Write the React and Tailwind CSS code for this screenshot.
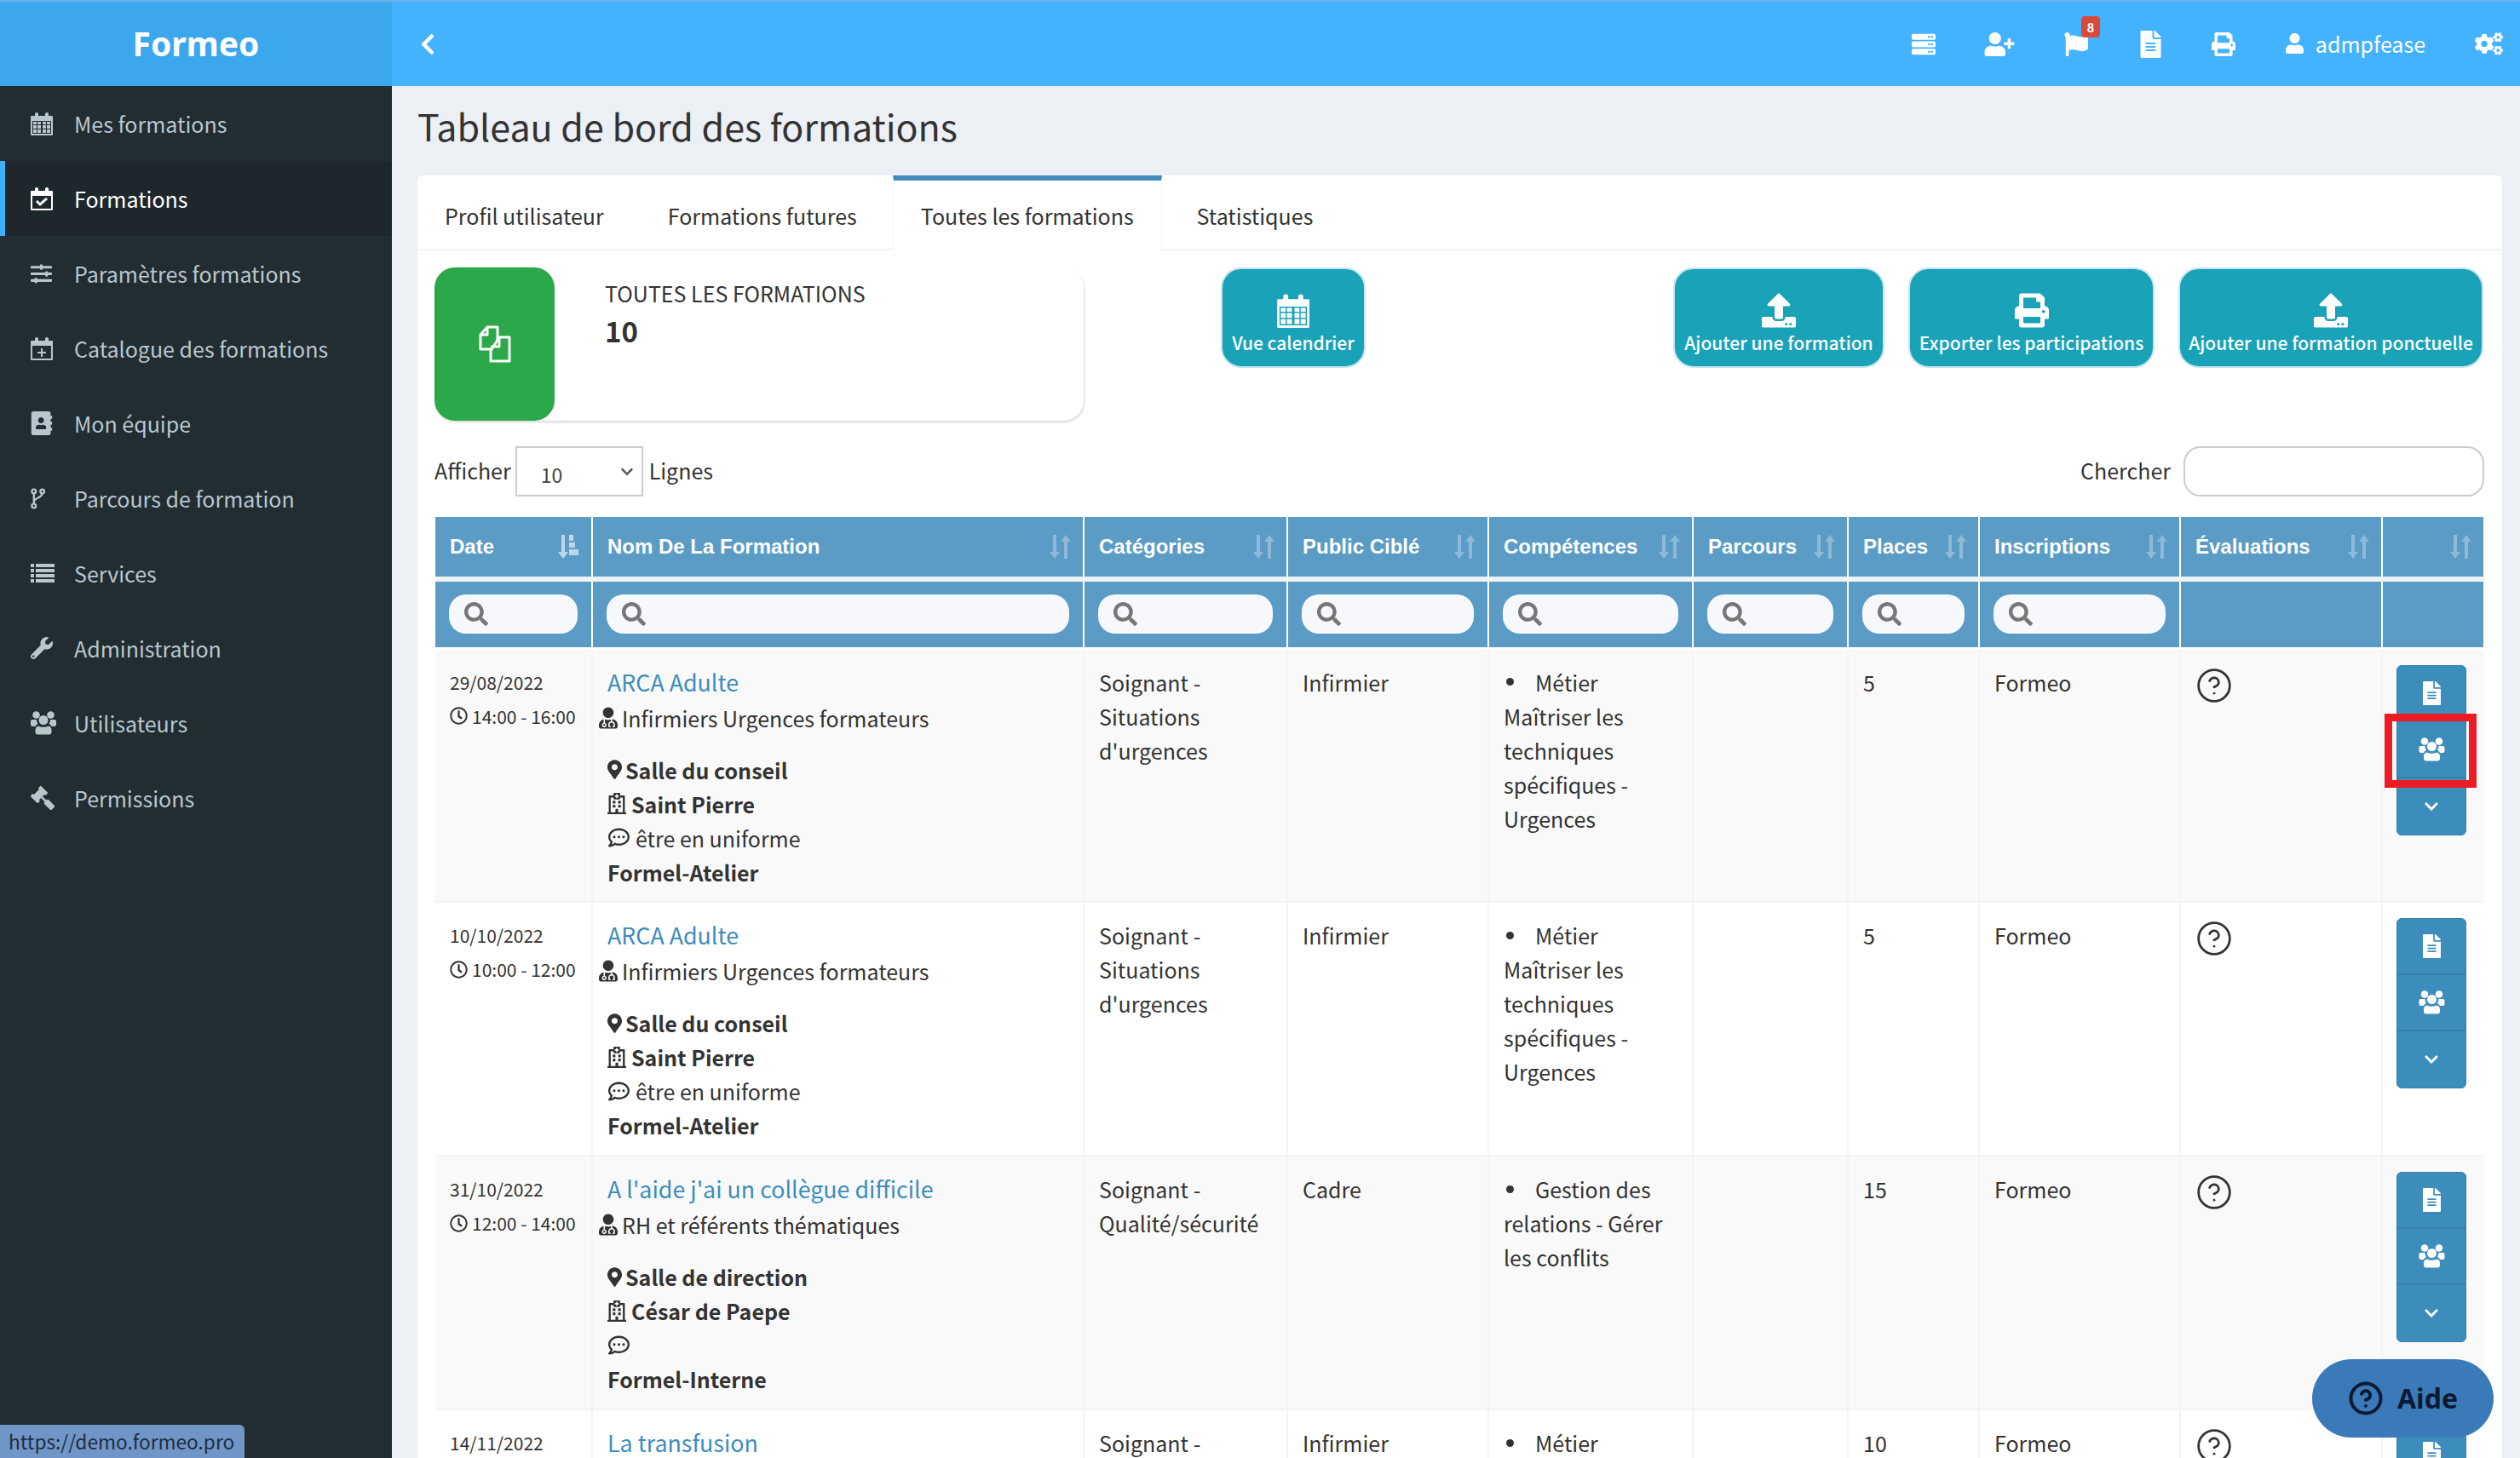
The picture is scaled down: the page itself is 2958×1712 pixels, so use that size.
import React from 'react';
import {
  FaAddressBook, FaChevronDown, FaChevronLeft, FaCogs, FaFileAlt, FaFlag, FaGavel, FaMapMarkerAlt, FaPrint,
  FaRegClock, FaRegCommentDots, FaRegHospital, FaSearch, FaServer, FaSlidersH, FaUpload,
  FaUser, FaUserMd, FaUserPlus, FaWrench,
} from 'react-icons/fa';
import { CircleHelp } from 'lucide-react';

const CalendarIcon = ({ className, mode }) => (
  <svg viewBox="0 0 26 28" className={className} fill="currentColor">
    <path fillRule="evenodd" d="M1 5h4V3a2 2 0 0 1 4 0v2h8V3a2 2 0 0 1 4 0v2h4a1 1 0 0 1 1 1v21a1 1 0 0 1-1 1H1a1 1 0 0 1-1-1V6a1 1 0 0 1 1-1zM2 11v15h22V11z" />
    {mode === 'grid' && (
      <path d="M3 12h4v3H3zM8 12h4v3H8zM14 12h4v3h-4zM19 12h4v3h-4zM3 16h4v4H3zM8 16h4v4H8zM14 16h4v4h-4zM19 16h4v4h-4zM3 21h4v4H3zM8 21h4v4H8zM14 21h4v4h-4zM19 21h4v4h-4z" />
    )}
    {mode === 'check' && <path d="M6 18l2-2 3 3 7-6 2 2-9 8z" />}
    {mode === 'plus' && <path d="M12 14h2v4h4v2h-4v4h-2v-4H8v-2h4z" />}
  </svg>
);

const UsersIcon = ({ className }) => (
  <svg viewBox="0 0 30 28" className={className} fill="currentColor">
    <circle cx="6.5" cy="4.5" r="4.3" />
    <circle cx="23.5" cy="4.5" r="4.3" />
    <path d="M2 10h5c0 2 .6 3.5 1.5 5-1.500.6-2.500 1.500-3 3H2.500A2.500 2.500 0 0 1 0 15.500V12c0-1.200.8-2 2-2z" />
    <path d="M28 10h-5c0 2-.6 3.500-1.500 5 1.500.6 2.500 1.500 3 3h3a2.500 2.500 0 0 0 2.500-2.500V12c0-1.200-.8-2-2-2z" />
    <circle cx="15" cy="10.5" r="5.5" />
    <path d="M9 17.500c1.800.8 3.800 1.200 6 1.200s4.200-.4 6-1.200c2.500.5 3.500 2.500 3.500 5v2a3 3 0 0 1-3 3h-13a3 3 0 0 1-3-3v-2c0-2.500 1-4.500 3.500-5z" />
  </svg>
);

const ForkIcon = ({ className }) => (
  <svg viewBox="0 0 18 26" className={className} fill="none" stroke="currentColor" strokeWidth="2.5">
    <circle cx="4" cy="4" r="2.5" />
    <circle cx="4" cy="22" r="2.5" />
    <circle cx="14.5" cy="4" r="2.5" />
    <path d="M4 6.5v13M14.5 6.5c0 6-10.5 5-10.5 11" />
  </svg>
);

const ListIcon = ({ className }) => (
  <svg viewBox="0 0 28 22" className={className} fill="currentColor">
    <path d="M0 0h4v4H0zM6 0h22v4H6zM0 6h4v4H0zM6 6h22v4H6zM0 12h4v4H0zM6 12h22v4H6zM0 18h4v4H0zM6 18h22v4H6z" />
  </svg>
);

const FilesIcon = ({ className }) => (
  <svg viewBox="0 0 38 44" className={className} fill="none" stroke="currentColor" strokeWidth="3" strokeLinejoin="round">
    <path d="M10 2h12v26H2V11z" />
    <path d="M10 2v9H2" />
    <path d="M24 14h12v28H14V30z" fill="#2aa84a" />
    <path d="M24 14v11h-10" />
  </svg>
);

const SortIcon = ({ active }) => (
  <svg viewBox="0 0 26 30" className="w-[26px] h-[30px] shrink-0" fill="currentColor">
    <path d="M5 1h4v20h4l-6 8-6-8h4z" className={active ? 'opacity-60' : 'opacity-30'} />
    {active ? (
      <path d="M14 1h5v7h-5zM14 10h7v6h-7zM14 18h11v7H14z" className="opacity-60" />
    ) : (
      <path d="M20 1l6 8h-4v20h-4V9h-4z" className="opacity-30" />
    )}
  </svg>
);

const nav = [
  { label: 'Mes formations', icon: <CalendarIcon className="w-[26px] h-[28px]" mode="grid" /> },
  { label: 'Formations', icon: <CalendarIcon className="w-[26px] h-[28px]" mode="check" />, active: true },
  { label: 'Paramètres formations', icon: <FaSlidersH className="w-[25px] h-[25px]" /> },
  { label: 'Catalogue des formations', icon: <CalendarIcon className="w-[26px] h-[28px]" mode="plus" /> },
  { label: 'Mon équipe', icon: <FaAddressBook className="w-[26px] h-[28px]" /> },
  { label: 'Parcours de formation', icon: <ForkIcon className="w-[17px] h-[25px]" /> },
  { label: 'Services', icon: <ListIcon className="w-[28px] h-[22px]" /> },
  { label: 'Administration', icon: <FaWrench className="w-[26px] h-[26px]" /> },
  { label: 'Utilisateurs', icon: <UsersIcon className="w-[30px] h-[28px]" /> },
  { label: 'Permissions', icon: <FaGavel className="w-[28px] h-[28px] -scale-x-100" /> },
];

const columns = [
  { label: 'Date', width: 'w-[184px]', search: true, active: true },
  { label: 'Nom De La Formation', width: 'w-[577px]', search: true },
  { label: 'Catégories', width: 'w-[239px]', search: true },
  { label: 'Public Ciblé', width: 'w-[236px]', search: true },
  { label: 'Compétences', width: 'w-[240px]', search: true },
  { label: 'Parcours', width: 'w-[182px]', search: true },
  { label: 'Places', width: 'w-[154px]', search: true },
  { label: 'Inscriptions', width: 'w-[236px]', search: true },
  { label: 'Évaluations', width: 'w-[237px]' },
  { label: '', width: 'w-[120px]' },
];

const rows = [
  {
    date: '29/08/2022', time: '14:00 - 16:00', title: 'ARCA Adulte', audience: 'Infirmiers Urgences formateurs',
    room: 'Salle du conseil', site: 'Saint Pierre', note: 'être en uniforme', type: 'Formel-Atelier',
    cat: ['Soignant -', 'Situations', "d'urgences"], target: 'Infirmier', skill: 'Métier',
    skillLines: ['Maîtriser les', 'techniques', 'spécifiques -', 'Urgences'], places: '5', marked: true,
  },
  {
    date: '10/10/2022', time: '10:00 - 12:00', title: 'ARCA Adulte', audience: 'Infirmiers Urgences formateurs',
    room: 'Salle du conseil', site: 'Saint Pierre', note: 'être en uniforme', type: 'Formel-Atelier',
    cat: ['Soignant -', 'Situations', "d'urgences"], target: 'Infirmier', skill: 'Métier',
    skillLines: ['Maîtriser les', 'techniques', 'spécifiques -', 'Urgences'], places: '5',
  },
  {
    date: '31/10/2022', time: '12:00 - 14:00', title: "A l'aide j'ai un collègue difficile", audience: 'RH et référents thématiques',
    room: 'Salle de direction', site: 'César de Paepe', note: '', type: 'Formel-Interne',
    cat: ['Soignant -', 'Qualité/sécurité'], target: 'Cadre', skill: 'Gestion des',
    skillLines: ['relations - Gérer', 'les conflits'], places: '15',
  },
  { date: '14/11/2022', title: 'La transfusion', cat: ['Soignant -'], target: 'Infirmier', skill: 'Métier', skillLines: [], places: '10' },
];

const ToolButton = ({ icon, label, className }) => (
  <button className={`h-[118px] rounded-[24px] bg-[#1aa3b8] border-2 border-[#c5e6ec] text-white flex flex-col items-center justify-start pt-[28px] text-[21px] leading-[30px] font-medium ${className}`}>
    {icon}
    <span className="mt-[2px] whitespace-nowrap">{label}</span>
  </button>
);

const Row = ({ row, index }) => {
  const cell = 'align-top pt-[18px] px-[17px] border-r-2 border-b-2 border-[#f4f4f4]';
  return (
    <tr className={`h-[298px] ${index % 2 === 0 ? 'bg-[#f9f9f9]' : 'bg-white'}`}>
      <td className={`${cell} text-[21px] leading-[40px] whitespace-nowrap`}>
        <div>{row.date}</div>
        {row.time && (
          <div className="flex items-center gap-[5px]">
            <FaRegClock className="w-[21px] h-[21px] shrink-0" />
            {row.time}
          </div>
        )}
      </td>
      <td className={cell}>
        <div className="text-[#3c8dbc] text-[26.8px] leading-[40px]">{row.title}</div>
        {row.audience && (
          <>
            <div className="flex items-center gap-[5px] -ml-[10px] mt-[2px]">
              <FaUserMd className="w-[22px] h-[26px] shrink-0" />
              {row.audience}
            </div>
            <div className="mt-[21px] font-bold flex items-center gap-[4px]">
              <FaMapMarkerAlt className="w-[17px] h-[25px] shrink-0" />
              {row.room}
            </div>
            <div className="font-bold flex items-center gap-[6px]">
              <FaRegHospital className="w-[22px] h-[27px] shrink-0" />
              {row.site}
            </div>
            <div className="h-[40px] flex items-center gap-[6px]">
              <FaRegCommentDots className="w-[27px] h-[25px] shrink-0" />
              {row.note}
            </div>
            <div className="font-bold">{row.type}</div>
          </>
        )}
      </td>
      <td className={cell}>
        {row.cat.map(line => <div key={line}>{line}</div>)}
      </td>
      <td className={cell}>{row.target}</td>
      <td className={cell}>
        <div className="flex items-center">
          <span className="w-[9px] h-[9px] rounded-full bg-[#333] ml-[3px] mr-[25px]"></span>
          {row.skill}
        </div>
        {row.skillLines.map(line => <div key={line}>{line}</div>)}
      </td>
      <td className={cell}></td>
      <td className={cell}>{row.places}</td>
      <td className={cell}>Formeo</td>
      <td className={cell}>
        <CircleHelp className="w-[44px] h-[44px] mt-[2px] text-[#333]" strokeWidth={1.5} />
      </td>
      <td className="align-top pt-[18px] border-b-2 border-[#f4f4f4]">
        <div className="relative w-[82px] ml-[16px] rounded-[6px] bg-[#3c8dbc] border border-[#367fa9] text-white">
          <div className="h-[66px] flex items-center justify-center border-b-2 border-[#367fa9]">
            <FaFileAlt className="w-[25px] h-[28px]" />
          </div>
          <div className="h-[66px] flex items-center justify-center border-b-2 border-[#367fa9]">
            <UsersIcon className="w-[31px] h-[28px]" />
          </div>
          <div className="h-[66px] flex items-center justify-center">
            <FaChevronDown className="w-[18px] h-[18px]" />
          </div>
          {row.marked && <div className="absolute left-[-15px] top-[56px] w-[108px] h-[87px] border-[9px] border-[#ed1c24]"></div>}
        </div>
      </td>
    </tr>
  );
};

const App = () => {
  return (
    <div className="h-screen w-full flex overflow-hidden bg-[#ecf0f5] text-[#333] text-[25px] leading-[40px] font-['Noto_Sans_CJK_SC',sans-serif]">
      <aside className="w-[460px] shrink-0 bg-[#222d32] text-[#b8c7ce]">
        <div className="h-[101px] bg-[#3ba7ed] border-t-2 border-[#6cb1e6] flex items-center justify-center pb-[2px] text-white text-[39px] font-bold font-['Noto_Sans',sans-serif]">
          Formeo
        </div>
        <nav>
          {nav.map(item => (
            <div
              key={item.label}
              className={`h-[88px] flex items-center ${item.active ? 'bg-[#1e282c] text-white border-l-[6px] border-[#3db0ff] pl-[30px]' : 'pl-[36px]'}`}
            >
              <span className="w-[51px] shrink-0 flex items-center">{item.icon}</span>
              {item.label}
            </div>
          ))}
        </nav>
      </aside>

      <div className="flex-1 min-w-0 flex flex-col">
        <header className="h-[101px] shrink-0 bg-[#44b3ff] border-t-2 border-[#6cb1e6] flex items-center text-white">
          <FaChevronLeft className="w-[24px] h-[28px] ml-[30px]" />
          <div className="ml-auto flex items-center">
            <span className="w-[88px] flex justify-center"><FaServer className="w-[28px] h-[28px]" /></span>
            <span className="w-[90px] flex justify-center"><FaUserPlus className="w-[36px] h-[28px]" /></span>
            <span className="relative w-[90px] flex justify-center">
              <FaFlag className="w-[28px] h-[30px]" />
              <span className="absolute left-[51px] top-[-18px] w-[22px] h-[25px] rounded-[4px] bg-[#d9493a] text-[15px] leading-[25px] font-bold text-center">8</span>
            </span>
            <span className="w-[86px] flex justify-center"><FaFileAlt className="w-[25px] h-[32px]" /></span>
            <span className="w-[84px] flex justify-center"><FaPrint className="w-[28px] h-[30px]" /></span>
            <span className="ml-[31px] flex items-center gap-[14px] pb-[2px]">
              <FaUser className="w-[21px] h-[26px]" />
              admpfease
            </span>
            <span className="ml-[58px] mr-[20px]"><FaCogs className="w-[33px] h-[33px]" /></span>
          </div>
        </header>

        <main className="flex-1 min-h-0 pl-[30px] pr-[21px]">
          <h1 className="h-[105px] pt-[19px] text-[43px] leading-[54px] font-normal">Tableau de bord des formations</h1>

          <section className="bg-white rounded-t-[6px] overflow-hidden">
            <div className="h-[88px] flex border-b-2 border-[#f4f4f4]">
              <div className="px-[32px] mr-[11px] pt-[27px]">Profil utilisateur</div>
              <div className="px-[32px] mr-[10px] pt-[27px]">Formations futures</div>
              <div className="h-[88px] px-[32px] border-t-[6px] border-x border-[#428bba] border-x-[#f4f4f4] bg-white pt-[21px] mr-[9px]">Toutes les formations</div>
              <div className="px-[32px] pt-[27px]">Statistiques</div>
            </div>

            <div className="flex pl-[20px] pr-[22px] pt-[20px] h-[230px]">
              <div className="w-[762px] h-[180px] flex rounded-[24px] shadow-[1px_2px_3px_rgba(0,0,0,0.15)]">
                <div className="w-[141px] h-[180px] rounded-[24px] bg-[#2aa84a] flex items-center justify-center text-white">
                  <FilesIcon className="w-[38px] h-[44px]" />
                </div>
                <div className="pl-[59px] pt-[11px]">
                  <div className="leading-[38px]">TOUTES LES FORMATIONS</div>
                  <div className="text-[33px] leading-[50px] font-bold">10</div>
                </div>
              </div>
              <ToolButton className="w-[170px] ml-[161px]" label="Vue calendrier" icon={<CalendarIcon className="w-[38px] h-[41px]" mode="grid" />} />
              <div className="ml-auto flex gap-[28px]">
                <ToolButton className="w-[248px]" label="Ajouter une formation" icon={<FaUpload className="w-[40px] h-[41px]" />} />
                <ToolButton className="w-[289px]" label="Exporter les participations" icon={<FaPrint className="w-[40px] h-[41px]" />} />
                <ToolButton className="w-[358px]" label="Ajouter une formation ponctuelle" icon={<FaUpload className="w-[40px] h-[41px]" />} />
              </div>
            </div>

            <div className="h-[83px] flex items-start pl-[20px] pr-[21px]">
              <span className="h-[55px] flex items-center">Afficher</span>
              <div className="ml-[5px] w-[150px] h-[59px] border-2 border-[#ccc] flex items-center pl-[28px] pt-[6px] text-[23px] text-[#444] relative">
                10
                <FaChevronDown className="absolute right-[9px] top-[20px] w-[16px] h-[16px] text-[#555]" />
              </div>
              <span className="ml-[7px] h-[55px] flex items-center">Lignes</span>
              <span className="ml-auto h-[55px] flex items-center">Chercher</span>
              <div className="ml-[15px] w-[353px] h-[59px] rounded-[20px] border-2 border-[#ccc]"></div>
            </div>

            <table className="table-fixed w-[2405px] ml-[21px] border-collapse">
              <thead className="text-white">
                <tr className="h-[73px]">
                  {columns.map((col, i) => (
                    <th key={i} className={`${col.width} bg-[#5b9cc7] border-r-2 border-b-[6px] border-r-white border-b-[#eef3f5] p-0 font-normal`}>
                      <div className="flex items-center justify-between pl-[17px] pr-[14px] font-['Liberation_Sans',sans-serif] font-bold text-[24px]">
                        <span className="whitespace-nowrap">{col.label}</span>
                        <SortIcon active={col.active} />
                      </div>
                    </th>
                  ))}
                </tr>
                <tr className="h-[81px]">
                  {columns.map((col, i) => (
                    <th key={i} className="bg-[#5b9cc7] border-r-2 border-r-white border-b-[3px] border-b-white px-[16px]">
                      {col.search && (
                        <div className="h-[46px] rounded-[20px] bg-[#f7f8fb] flex items-center pl-[18px] text-[#777]">
                          <FaSearch className="w-[28px] h-[28px]" />
                        </div>
                      )}
                    </th>
                  ))}
                </tr>
              </thead>
              <tbody>
                {rows.map((row, i) => <Row key={i} row={row} index={i} />)}
              </tbody>
            </table>
          </section>
        </main>
      </div>

      <div className="fixed left-0 bottom-0 w-[287px] h-[39px] rounded-tr-[6px] bg-[#7096c8] pl-[10px] text-[22.7px] leading-[39px] text-[#1f2d3d]">
        https://demo.formeo.pro
      </div>
      <div className="fixed right-[31px] bottom-[24px] w-[213px] h-[92px] rounded-full bg-[#3b7ab8] flex items-center justify-center gap-[16px] text-[#0b1a33] text-[32px] font-bold font-['Noto_Sans',sans-serif]">
        <CircleHelp className="w-[42px] h-[42px]" strokeWidth={2.3} />
        Aide
      </div>
    </div>
  );
};

export default App;
